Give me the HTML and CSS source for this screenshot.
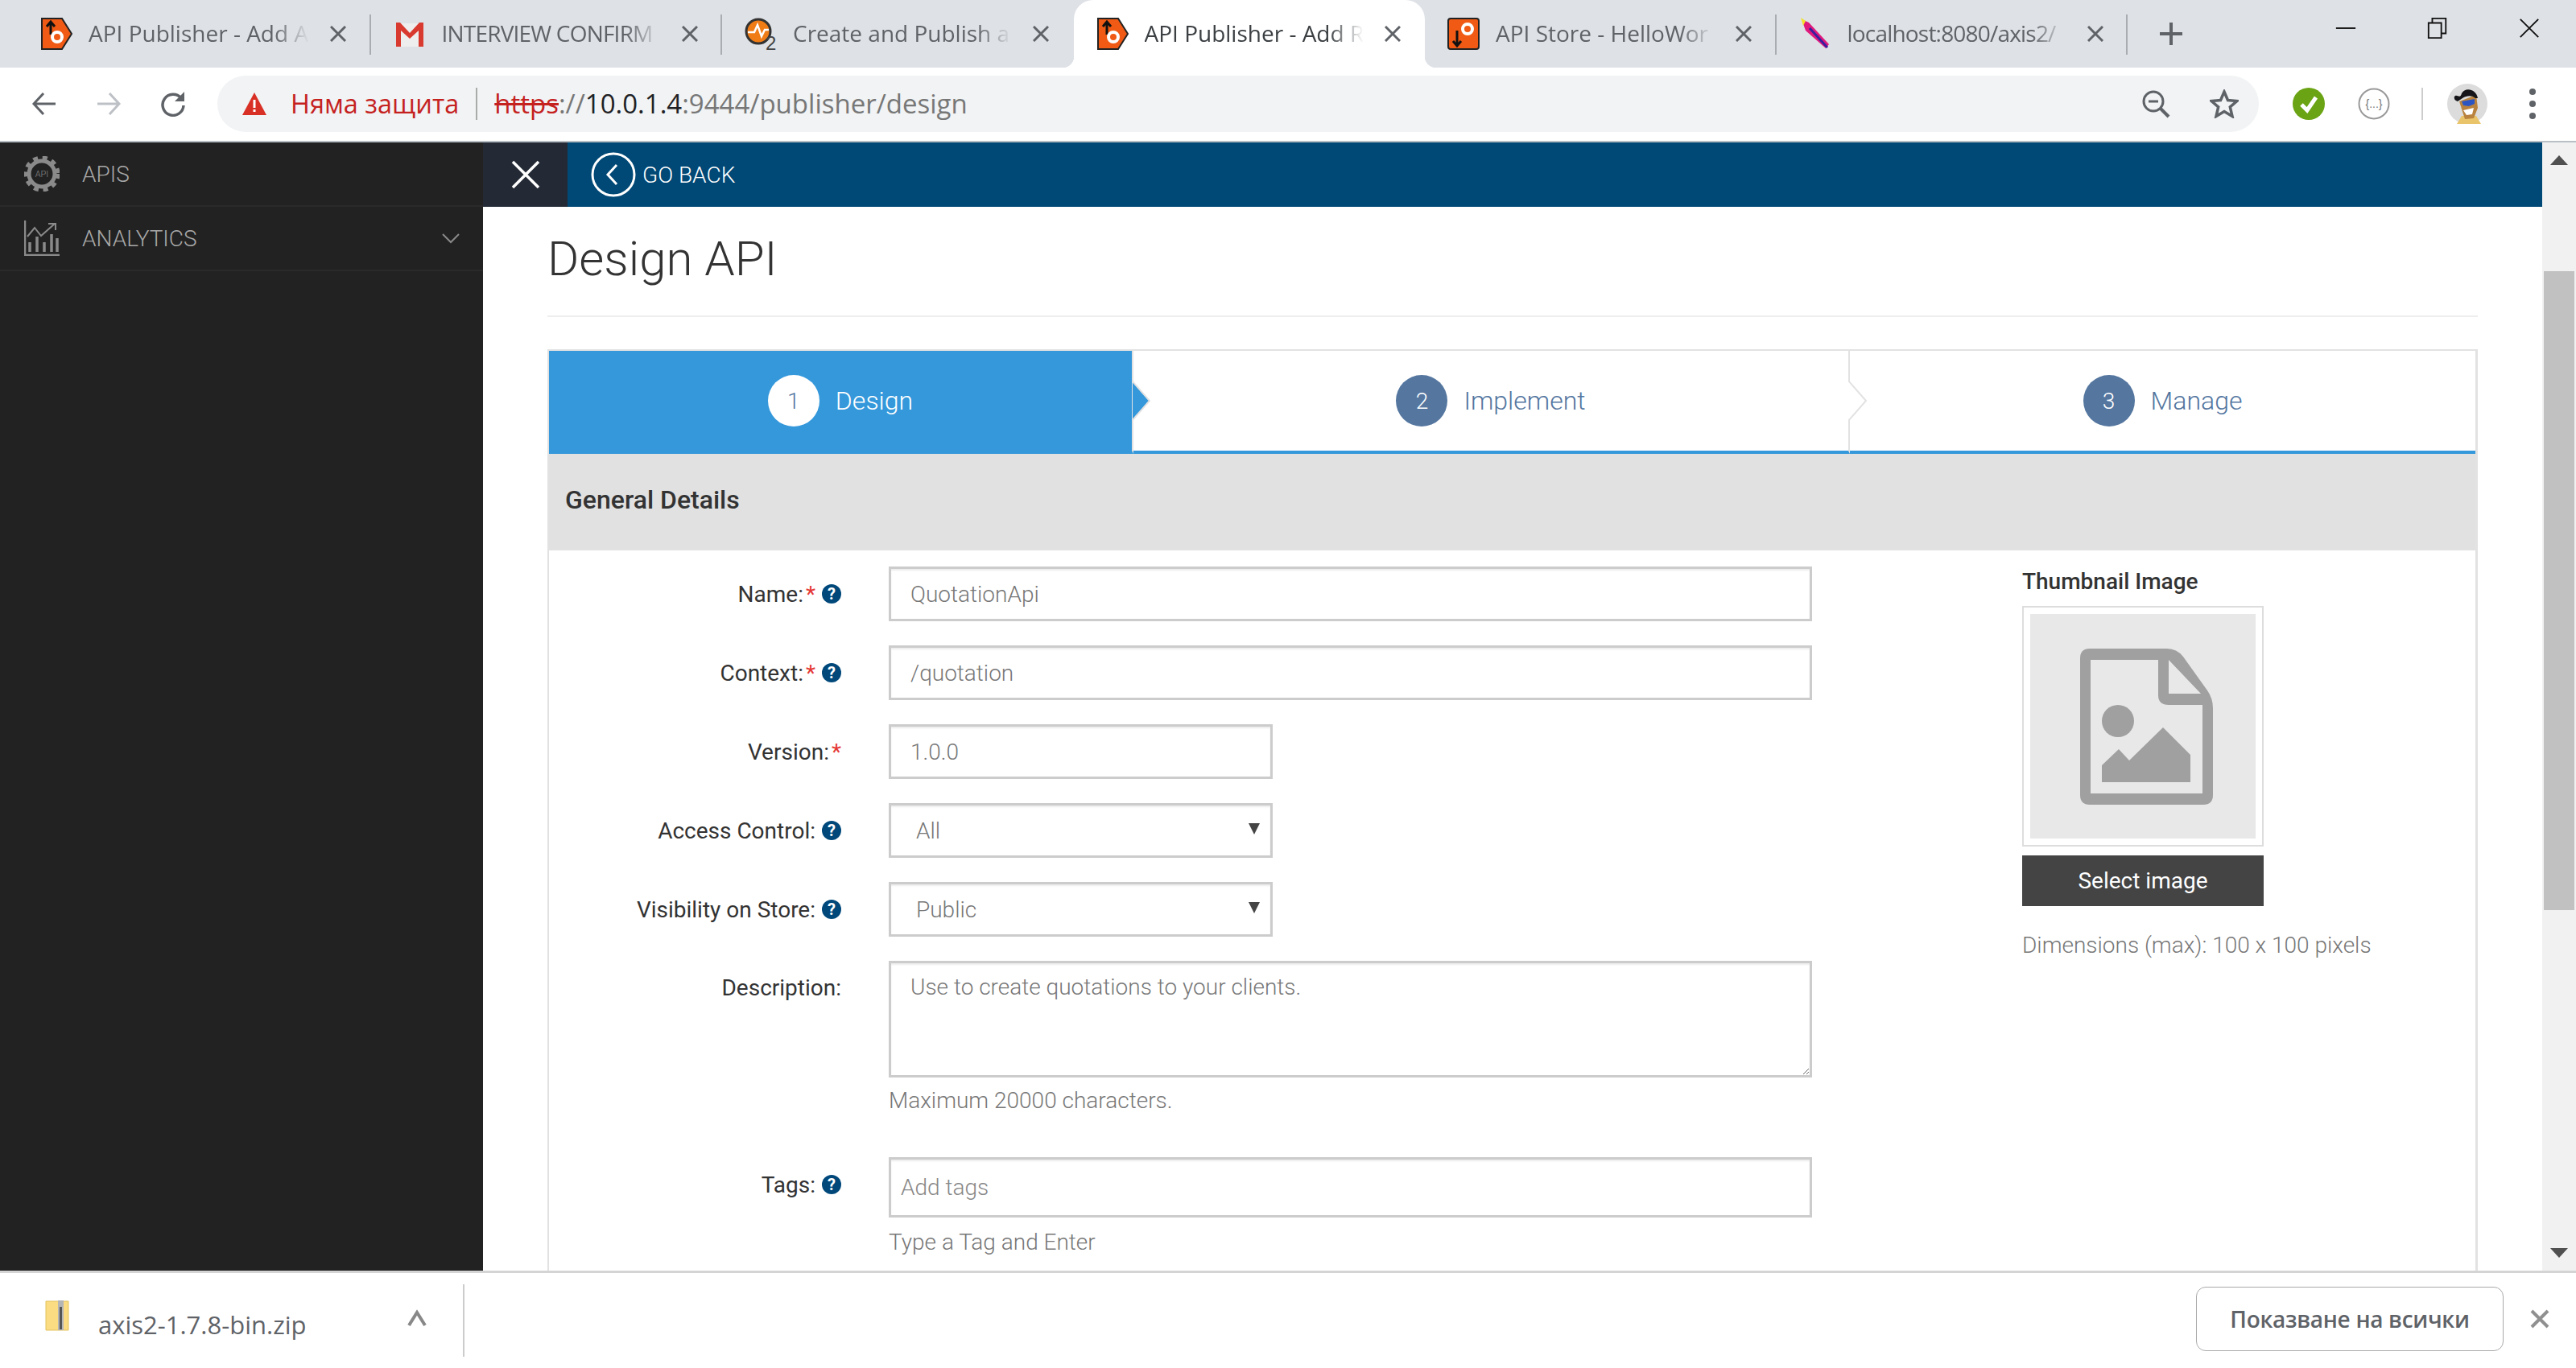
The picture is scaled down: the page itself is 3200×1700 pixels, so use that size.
FILE: index.html
```html
<!DOCTYPE html>
<html>
<head>
  <title>API Publisher - Design API</title>
  <link rel="stylesheet" href="styles.css">
</head>
<body>
  <div class="tabstrip">
    <div class="tab">
      <svg class="favicon" viewBox="0 0 40 40"><path d="M2 1H27L39 20L27 39H2Z" fill="#f05a14" stroke="#222" stroke-width="2"/><path d="M13 6V21M8 11L13 5L18 11" fill="none" stroke="#111" stroke-width="3"/><circle cx="21" cy="24" r="6" fill="none" stroke="#fff" stroke-width="4"/></svg>
      <span class="tab-title">API Publisher - Add A</span>
      <svg class="tab-close" viewBox="0 0 20 20"><path d="M1 1L19 19M19 1L1 19" stroke="#5f6368" stroke-width="3"/></svg>
    </div>
    <div class="tab">
      <svg class="favicon" viewBox="0 0 40 40"><path d="M4 7H36V36H4Z" fill="#eee"/><path d="M3 36V6H8L20 19L32 6H37V36H31V16L20 26L9 16V36Z" fill="#d93a2f"/></svg>
      <span class="tab-title tab-title-tight">INTERVIEW CONFIRM</span>
      <svg class="tab-close" viewBox="0 0 20 20"><path d="M1 1L19 19M19 1L1 19" stroke="#5f6368" stroke-width="3"/></svg>
    </div>
    <div class="tab">
      <svg class="favicon" viewBox="0 0 40 40"><circle cx="17" cy="17" r="15" fill="#f07c16" stroke="#333" stroke-width="3"/><path d="M4 18H12L16 9L21 23L25 15H30" fill="none" stroke="#fff" stroke-width="2.500"/><text x="26" y="40" class="o2-mark">2</text></svg>
      <span class="tab-title">Create and Publish a</span>
      <svg class="tab-close" viewBox="0 0 20 20"><path d="M1 1L19 19M19 1L1 19" stroke="#5f6368" stroke-width="3"/></svg>
    </div>
    <div class="tab tab-active">
      <svg class="favicon" viewBox="0 0 40 40"><path d="M2 1H27L39 20L27 39H2Z" fill="#f05a14" stroke="#222" stroke-width="2"/><path d="M13 6V21M8 11L13 5L18 11" fill="none" stroke="#111" stroke-width="3"/><circle cx="21" cy="24" r="6" fill="none" stroke="#fff" stroke-width="4"/></svg>
      <span class="tab-title">API Publisher - Add R</span>
      <svg class="tab-close" viewBox="0 0 20 20"><path d="M1 1L19 19M19 1L1 19" stroke="#5f6368" stroke-width="3"/></svg>
    </div>
    <div class="tab">
      <svg class="favicon" viewBox="0 0 40 40"><rect x="1" y="1" width="38" height="38" rx="3" fill="#f05a14" stroke="#222" stroke-width="2"/><circle cx="25" cy="14" r="6" fill="none" stroke="#fff" stroke-width="4"/><path d="M12 16V34M7 29L12 35L17 29" fill="none" stroke="#111" stroke-width="3"/></svg>
      <span class="tab-title">API Store - HelloWor</span>
      <svg class="tab-close" viewBox="0 0 20 20"><path d="M1 1L19 19M19 1L1 19" stroke="#5f6368" stroke-width="3"/></svg>
    </div>
    <div class="tab">
      <svg class="favicon" viewBox="0 0 40 40"><path d="M3 2L12 6L37 33L33 38L8 16Z" fill="#e0197d"/><path d="M2 0L8 4L5 10Z" fill="#f3e22c"/><path d="M13 13L35 37" stroke="#3a1e9e" stroke-width="3"/></svg>
      <span class="tab-title tab-title-tight">localhost:8080/axis2/</span>
      <svg class="tab-close" viewBox="0 0 20 20"><path d="M1 1L19 19M19 1L1 19" stroke="#5f6368" stroke-width="3"/></svg>
    </div>
    <svg class="new-tab" viewBox="0 0 32 32"><path d="M16 2V30M2 16H30" stroke="#5f6368" stroke-width="4"/></svg>
    <div class="window-controls">
      <svg viewBox="0 0 30 30"><path d="M2 15H28" stroke="#111" stroke-width="2"/></svg>
      <svg viewBox="0 0 30 30"><path d="M3 8H20V28H3ZM8 8V2H26V22H20" fill="none" stroke="#111" stroke-width="2"/></svg>
      <svg viewBox="0 0 30 30"><path d="M3 3L27 27M27 3L3 27" stroke="#111" stroke-width="2"/></svg>
    </div>
  </div>

  <div class="toolbar">
    <svg class="nav-icon" viewBox="0 0 32 32"><path d="M30 16H4M15 3L3 16L15 29" fill="none" stroke="#5f6368" stroke-width="3"/></svg>
    <svg class="nav-icon nav-forward" viewBox="0 0 32 32"><path d="M2 16H28M17 3L29 16L17 29" fill="none" stroke="#bdc1c6" stroke-width="3"/></svg>
    <svg class="nav-icon nav-reload" viewBox="0 0 32 32"><path d="M26 9A13 13 0 1 0 29 18" fill="none" stroke="#5f6368" stroke-width="3.500"/><path d="M30 1V13H18Z" fill="#5f6368"/></svg>
    <div class="omnibox">
      <svg class="warn-icon" viewBox="0 0 32 32"><path d="M16 2L31 30H1Z" fill="#d93025"/><path d="M14.500 11H17.500V21H14.500ZM14.500 23H17.500V26H14.500Z" fill="#fff"/></svg>
      <span class="not-secure">Няма защита</span>
      <span class="omni-sep"></span>
      <span class="url"><span class="url-https">https</span>://<span class="url-host">10.0.1.4</span>:9444/publisher/design</span>
      <svg class="omni-zoom" viewBox="0 0 36 36"><circle cx="15" cy="15" r="12" fill="none" stroke="#5f6368" stroke-width="3"/><path d="M23 23L34 34" stroke="#5f6368" stroke-width="4"/><path d="M9 15H21" stroke="#5f6368" stroke-width="3"/></svg>
      <svg class="omni-star" viewBox="0 0 36 36"><path d="M18 3L22.500 13.500L34 14.500L25.300 22L28 33.500L18 27.500L8 33.500L10.700 22L2 14.500L13.500 13.500Z" fill="none" stroke="#5f6368" stroke-width="3.500"/></svg>
    </div>
    <svg class="ext-check" viewBox="0 0 40 40"><circle cx="20" cy="20" r="20" fill="#6aa313"/><path d="M11 21L18 28L29 12" fill="none" stroke="#fff" stroke-width="5"/></svg>
    <svg class="ext-swagger" viewBox="0 0 40 40"><circle cx="20" cy="20" r="18.500" fill="#fff" stroke="#999" stroke-width="2"/><text x="20" y="25" class="swagger-mark">{...}</text></svg>
    <span class="toolbar-sep"></span>
    <svg class="avatar" viewBox="0 0 50 50"><circle cx="25" cy="25" r="25" fill="#dcdcdc"/><path d="M12 50L18 40H36L42 50Z" fill="#e9c46a"/><path d="M15 22L36 14L38 30L33 43L22 44Z" fill="#b9833f"/><path d="M9 16C12 12 16 20 18 12C22 4 36 6 38 18L35 18C30 14 24 15 19 18L13 22C10 21 8 19 9 16Z" fill="#16161a"/><path d="M18 22L34 19L34 25L27 28L20 27Z" fill="#2c55c4"/><path d="M20 33L33 30L31 38L24 39Z" fill="#fff"/></svg>
    <div class="menu-dots"><i></i><i></i><i></i></div>
  </div>

  <div class="main">
    <aside class="sidebar">
      <div class="side-item">
        <svg class="side-icon" viewBox="0 0 44 44"><circle cx="22" cy="22" r="16" fill="none" stroke="#8a8a8a" stroke-width="5"/><circle cx="22" cy="22" r="20" fill="none" stroke="#8a8a8a" stroke-width="5" stroke-dasharray="6 5.800"/><text x="22" y="26" class="api-mark">API</text></svg>
        <span>APIS</span>
      </div>
      <div class="side-item">
        <svg class="side-icon" viewBox="0 0 44 44"><path d="M1 0V43H44" fill="none" stroke="#8a8a8a" stroke-width="2.500"/><path d="M7 39V27M16 39V20M25 39V27M34 39V17M41 39V22" stroke="#8a8a8a" stroke-width="3.500"/><path d="M4 20L13 9L21 19L38 4M30 4H39V12" fill="none" stroke="#8a8a8a" stroke-width="2"/></svg>
        <span>ANALYTICS</span>
        <svg class="side-chevron" viewBox="0 0 22 14"><path d="M1 2L11 12L21 2" fill="none" stroke="#8a8a8a" stroke-width="2"/></svg>
      </div>
    </aside>

    <div class="content">
      <div class="topbar">
        <div class="topbar-close">
          <svg viewBox="0 0 36 36"><path d="M2 2L34 34M34 2L2 34" stroke="#fff" stroke-width="3.500"/></svg>
        </div>
        <svg class="back-circle" viewBox="0 0 56 56"><circle cx="28" cy="28" r="26" fill="none" stroke="#fff" stroke-width="3"/><path d="M32 16L21 28L32 40" fill="none" stroke="#fff" stroke-width="3"/></svg>
        <span class="go-back">GO BACK</span>
      </div>

      <div class="page">
        <h1 class="page-title">Design API</h1>
        <div class="box">
          <div class="steps">
            <div class="step step-active">
              <span class="step-num">1</span>
              <span>Design</span>
              <svg class="step-arrow" viewBox="0 0 24 50"><path d="M0 0L22 25L0 50Z" fill="#3498db" stroke="#e2e2e2" stroke-width="2"/></svg>
            </div>
            <div class="step">
              <span class="step-num">2</span>
              <span>Implement</span>
              <svg class="step-arrow" viewBox="0 0 24 50"><path d="M0 0L22 25L0 50" fill="#fff" stroke="#e2e2e2" stroke-width="2"/></svg>
            </div>
            <div class="step">
              <span class="step-num">3</span>
              <span>Manage</span>
            </div>
          </div>

          <div class="section-head">General Details</div>

          <div class="section-body">
            <div class="fields">
              <div class="row">
                <label class="field-label">Name:<span class="req">*</span><span class="help">?</span></label>
                <input class="control wide" type="text" value="QuotationApi">
              </div>
              <div class="row">
                <label class="field-label">Context:<span class="req">*</span><span class="help">?</span></label>
                <input class="control wide" type="text" value="/quotation">
              </div>
              <div class="row">
                <label class="field-label">Version:<span class="req">*</span></label>
                <input class="control narrow" type="text" value="1.0.0">
              </div>
              <div class="row">
                <label class="field-label">Access Control:<span class="help">?</span></label>
                <div class="select-wrap narrow"><select class="control"><option>All</option></select></div>
              </div>
              <div class="row">
                <label class="field-label">Visibility on Store:<span class="help">?</span></label>
                <div class="select-wrap narrow"><select class="control"><option>Public</option></select></div>
              </div>
              <div class="row row-desc">
                <label class="field-label label-desc">Description:</label>
                <div>
                  <textarea class="control wide">Use to create quotations to your clients.</textarea>
                  <p class="hint">Maximum 20000 characters.</p>
                </div>
              </div>
              <div class="row row-tags">
                <label class="field-label">Tags:<span class="help">?</span></label>
                <div>
                  <input class="control wide tags-input" type="text" placeholder="Add tags">
                  <p class="hint hint-tags">Type a Tag and Enter</p>
                </div>
              </div>
            </div>

            <div class="thumb">
              <h4 class="thumb-title">Thumbnail Image</h4>
              <div class="thumb-frame">
                <div class="thumb-inner">
                  <svg class="thumb-icon" viewBox="0 0 165 194"><path fill-rule="evenodd" d="M12 0H108Q120 0 128 10L158 52Q165 62 165 74V182Q165 194 153 194H12Q0 194 0 182V12Q0 0 12 0ZM13 14V180H152V70H110Q97 70 97 58V14ZM110 14V56H150Z" fill="#a0a0a0"/><circle cx="47" cy="90" r="20" fill="#a0a0a0"/><path d="M27 145L48 125L61 139L103 98L137 132V166H27Z" fill="#a0a0a0"/></svg>
                </div>
              </div>
              <button class="thumb-btn">Select image</button>
              <p class="thumb-note">Dimensions (max): 100 x 100 pixels</p>
            </div>
          </div>
        </div>
      </div>
    </div>

    <div class="scrollbar">
      <span class="arrow-up"></span>
      <span class="scroll-thumb"></span>
      <span class="arrow-down"></span>
    </div>
  </div>

  <div class="shelf">
    <svg class="zip-icon" viewBox="0 0 30 38"><path d="M1 1H29V37H1Z" fill="#fbdc83" stroke="#e3c35c"/><path d="M16 0H23V37H16Z" fill="#b5b5b5"/><path d="M18 8H21V36H18Z" fill="#555"/></svg>
    <span class="zip-name">axis2-1.7.8-bin.zip</span>
    <svg class="zip-chevron" viewBox="0 0 24 22"><path d="M2 20L12 4L22 20" fill="none" stroke="#888" stroke-width="4"/></svg>
    <span class="shelf-sep"></span>
    <button class="show-all">Показване на всички</button>
    <svg class="shelf-close" viewBox="0 0 24 24"><path d="M2 2L22 22M22 2L2 22" stroke="#909090" stroke-width="4"/></svg>
  </div>
</body>
</html>
```

FILE: styles.css
```css
* {
  box-sizing: border-box;
}

html, body {
  margin: 0;
  height: 1700px;
  overflow: hidden;
}

body {
  display: flex;
  flex-direction: column;
  font-family: Roboto, sans-serif;
  font-size: 28px;
  background: #fff;
}

/* browser tab strip */
.tabstrip {
  display: flex;
  align-items: center;
  height: 84px;
  padding-left: 24px;
  background: #dee1e6;
  font-family: "Open Sans", sans-serif;
}

.tab {
  position: relative;
  display: flex;
  align-items: center;
  width: 436.500px;
  height: 84px;
  padding-left: 26px;
  color: #5f6368;
  font-size: 28px;
}

.tab + .tab {
  padding-left: 28px;
}

.tab::after {
  content: "";
  position: absolute;
  right: 0;
  top: 18px;
  height: 50px;
  border-right: 2px solid #a9adb2;
}

.tab:nth-child(3)::after {
  display: none;
}

.tab-active {
  background: #fff;
  color: #3c4043;
  border-radius: 24px 24px 0 0;
}

.tab-active::before,
.tab-active::after {
  content: "";
  position: absolute;
  top: auto;
  bottom: 0;
  width: 14px;
  height: 14px;
  border: 0;
}

.tab-active::before {
  left: -14px;
  background: radial-gradient(circle at 0 0, transparent 14px, #fff 14.500px);
}

.tab-active::after {
  right: -14px;
  background: radial-gradient(circle at 100% 0, transparent 14px, #fff 14.500px);
}

.favicon {
  flex: none;
  width: 40px;
  height: 40px;
  margin-right: 20px;
  overflow: visible;
}

.o2-mark {
  font-family: "Liberation Sans", sans-serif;
  font-size: 24px;
  fill: #444;
}

.tab-title {
  flex: none;
  width: 274px;
  margin-bottom: 2px;
  overflow: hidden;
  white-space: nowrap;
  -webkit-mask-image: linear-gradient(to right, #000 84%, transparent 100%);
  mask-image: linear-gradient(to right, #000 84%, transparent 100%);
}

.tab + .tab .tab-title {
  width: 272px;
}

.tab-title-tight {
  letter-spacing: -.8px;
}

.tab-close {
  flex: none;
  width: 20px;
  height: 20px;
  margin-left: 26px;
}

.new-tab {
  position: relative;
  width: 32px;
  height: 32px;
  margin-left: 38px;
}

.window-controls {
  display: flex;
  gap: 86px;
  margin-left: auto;
  margin-right: 44px;
  margin-bottom: 14px;
}

.window-controls svg {
  width: 28px;
  height: 28px;
}

/* address row */
.toolbar {
  display: flex;
  align-items: center;
  height: 93px;
  border-bottom: 2px solid #b8c0c6;
  padding-bottom: 2px;
}

.nav-icon {
  width: 32px;
  height: 32px;
  margin-left: 39px;
}

.nav-forward {
  margin-left: 48px;
}

.nav-reload {
  margin-left: 48px;
}

.omnibox {
  display: flex;
  align-items: center;
  width: 2536px;
  height: 70px;
  margin-left: 39px;
  padding-left: 30px;
  border-radius: 35px;
  background: #f1f3f4;
  font-family: "Open Sans", sans-serif;
  font-size: 33px;
}

.warn-icon {
  width: 32px;
  height: 32px;
}

.not-secure {
  margin-left: 29px;
  color: #c5221f;
  font-size: 32.500px;
}

.omni-sep {
  width: 2px;
  height: 40px;
  margin: 0 21px;
  background: #aaa;
}

.url {
  color: #777;
}

.url-https {
  color: #c5221f;
  text-decoration: line-through;
}

.url-host {
  color: #202124;
}

.omni-zoom {
  width: 36px;
  height: 36px;
  margin-left: auto;
}

.omni-star {
  width: 36px;
  height: 36px;
  margin-left: 49px;
  margin-right: 25px;
}

.ext-check {
  width: 40px;
  height: 40px;
  margin-left: 42px;
}

.ext-swagger {
  width: 40px;
  height: 40px;
  margin-left: 41px;
}

.swagger-mark {
  font-family: "Liberation Sans", sans-serif;
  font-size: 14px;
  fill: #777;
  text-anchor: middle;
}

.toolbar-sep {
  width: 2px;
  height: 40px;
  margin-left: 39px;
  background: #ccc;
}

.avatar {
  width: 50px;
  height: 50px;
  margin-left: 30px;
}

.menu-dots {
  display: flex;
  flex-direction: column;
  gap: 7px;
  margin-left: 52px;
}

.menu-dots i {
  width: 8px;
  height: 8px;
  border-radius: 50%;
  background: #5f6368;
}

/* page area */
.main {
  display: flex;
  flex: 1;
  min-height: 0;
}

.sidebar {
  flex: none;
  width: 600px;
  background: #222;
  color: #a8a8a8;
  font-weight: 300;
}

.side-item {
  display: flex;
  align-items: center;
  height: 80px;
  padding-left: 30px;
  border-bottom: 2px solid #2a2a2a;
}

.side-icon {
  width: 44px;
  height: 44px;
  margin-right: 28px;
}

.api-mark {
  font-family: Roboto, sans-serif;
  font-size: 11px;
  fill: #8a8a8a;
  text-anchor: middle;
}

.side-chevron {
  width: 22px;
  height: 14px;
  margin-left: auto;
  margin-right: 29px;
}

.content {
  display: flex;
  flex-direction: column;
  flex: 1;
  min-width: 0;
  overflow: hidden;
}

.topbar {
  display: flex;
  flex: none;
  align-items: center;
  height: 80px;
  background: #004875;
  color: #fff;
}

.topbar-close {
  display: flex;
  align-items: center;
  justify-content: center;
  width: 105px;
  height: 100%;
  background: #232a35;
}

.topbar-close svg {
  width: 36px;
  height: 36px;
}

.back-circle {
  width: 56px;
  height: 56px;
  margin-left: 29px;
}

.go-back {
  margin-left: 8px;
  font-weight: 300;
}

.page {
  padding: 0 80px;
}

.page-title {
  margin: 0 0 40px;
  padding-top: 28px;
  height: 137px;
  border-bottom: 2px solid #eee;
  font-size: 60px;
  line-height: 74px;
  font-weight: 300;
  color: #333;
}

.box {
  border: 2px solid #e2e2e2;
  border-right-width: 3px;
  padding-bottom: 400px;
}

.steps {
  display: grid;
  grid-template-columns: 726px 890px 1fr;
  height: 128px;
  color: #54769f;
  font-weight: 300;
  font-size: 32px;
}

.step {
  position: relative;
  display: flex;
  align-items: center;
  justify-content: center;
  gap: 20px;
  border-bottom: 4px solid #3498db;
  border-right: 2px solid #e2e2e2;
}

.step:last-child {
  border-right: 0;
}

.step-active {
  background: #3498db;
  color: #fff;
}

.step-num {
  display: flex;
  align-items: center;
  justify-content: center;
  width: 64px;
  height: 64px;
  border-radius: 50%;
  background: #54769f;
  color: #fff;
  font-size: 28px;
}

.step-active .step-num {
  background: #fff;
  color: #54769f;
}

.step-arrow {
  position: absolute;
  top: 37px;
  right: -24px;
  width: 24px;
  height: 50px;
}

.section-head {
  display: flex;
  align-items: center;
  height: 120px;
  padding: 0 0 6px 20px;
  background: #e1e1e1;
  color: #333;
  font-size: 32px;
  font-weight: 500;
}

.section-body {
  display: flex;
  padding-top: 20px;
}

.fields {
  flex: none;
  width: 1830px;
}

.row {
  display: flex;
  margin-bottom: 30px;
}

.field-label {
  display: flex;
  flex: none;
  justify-content: flex-end;
  align-items: center;
  width: 363px;
  height: 68px;
  margin-right: 59px;
  color: #333;
  font-weight: 400;
}

.label-desc {
  height: 66px;
}

.req {
  margin-left: 3px;
  color: #e53935;
}

.help {
  display: flex;
  align-items: center;
  justify-content: center;
  width: 24px;
  height: 24px;
  margin-left: 8px;
  border-radius: 50%;
  background: #00487a;
  color: #fff;
  font-size: 20px;
  font-weight: 700;
}

.control {
  height: 68px;
  padding: 0 24px;
  border: 3px solid #ccc;
  box-shadow: inset 0 2px 2px rgba(0, 0, 0, .075);
  border-radius: 0;
  background: #fff;
  color: #777;
  font-family: Roboto, sans-serif;
  font-size: 28px;
  font-weight: 300;
  outline: none;
}

.wide {
  display: block;
  width: 1147px;
}

.narrow {
  width: 477px;
}

.select-wrap {
  position: relative;
}

.select-wrap::after {
  content: "";
  position: absolute;
  right: 16px;
  top: 25px;
  border-left: 7px solid transparent;
  border-right: 7px solid transparent;
  border-top: 14px solid #444;
}

.select-wrap select {
  width: 100%;
  padding-left: 31px;
  -webkit-appearance: none;
  appearance: none;
}

textarea.control {
  height: 145px;
  padding-top: 12px;
  line-height: 36px;
}

.hint {
  margin: 12px 0 0;
  color: #777;
  font-weight: 300;
  line-height: 34px;
}

.row-desc {
  margin-bottom: 53px;
}

.tags-input {
  height: 75px;
  padding-left: 12px;
}

.hint-tags {
  margin-top: 14px;
}

.tags-input::placeholder {
  color: #888;
  opacity: 1;
}

.thumb {
  width: 400px;
}

.thumb-title {
  margin: 0 0 12px;
  color: #333;
  font-size: 28px;
  font-weight: 500;
  line-height: 37px;
}

.thumb-frame {
  width: 300px;
  height: 299px;
  padding: 8px 8px;
  border: 2px solid #ddd;
}

.thumb-inner {
  display: flex;
  align-items: center;
  justify-content: center;
  height: 100%;
  background: #e8e8e8;
}

.thumb-icon {
  width: 165px;
  height: 194px;
  margin-left: 8px;
}

.thumb-btn {
  display: block;
  width: 300px;
  height: 63px;
  margin-top: 11px;
  border: 0;
  background: #444;
  color: #fff;
  font-family: Roboto, sans-serif;
  font-size: 28px;
}

.thumb-note {
  margin: 32px 0 0;
  width: 480px;
  color: #777;
  font-weight: 300;
  line-height: 34px;
}

.scrollbar {
  display: flex;
  flex: none;
  flex-direction: column;
  align-items: center;
  width: 42px;
  background: #f1f1f1;
}

.arrow-up {
  margin-top: 16px;
  border-left: 11px solid transparent;
  border-right: 11px solid transparent;
  border-bottom: 12px solid #505050;
}

.scroll-thumb {
  width: 38px;
  height: 794px;
  margin-top: 132px;
  background: #c1c1c1;
}

.arrow-down {
  margin-top: auto;
  margin-bottom: 16px;
  border-left: 11px solid transparent;
  border-right: 11px solid transparent;
  border-top: 12px solid #505050;
}

/* download shelf */
.shelf {
  display: flex;
  flex: none;
  align-items: center;
  height: 121px;
  border-top: 3px solid #d4d4d4;
  font-family: "Open Sans", sans-serif;
}

.zip-icon {
  width: 30px;
  height: 38px;
  margin-left: 56px;
  margin-bottom: 12px;
}

.zip-name {
  margin-left: 36px;
  margin-top: 10px;
  color: #5f6368;
  font-size: 31px;
}

.zip-chevron {
  width: 24px;
  height: 22px;
  margin-left: 126px;
  margin-bottom: 6px;
}

.shelf-sep {
  width: 2px;
  height: 90px;
  margin-left: 45px;
  background: #ccc;
}

.show-all {
  flex: none;
  width: 382px;
  height: 80px;
  margin-left: auto;
  margin-bottom: 5px;
  border: 1px solid #aaa;
  border-radius: 12px;
  background: #fff;
  color: #5f6368;
  font-family: "Open Sans", sans-serif;
  font-size: 28px;
  font-weight: 600;
  letter-spacing: -.3px;
}

.shelf-close {
  width: 24px;
  height: 24px;
  margin-left: 33px;
  margin-right: 33px;
  margin-bottom: 5px;
}
```
